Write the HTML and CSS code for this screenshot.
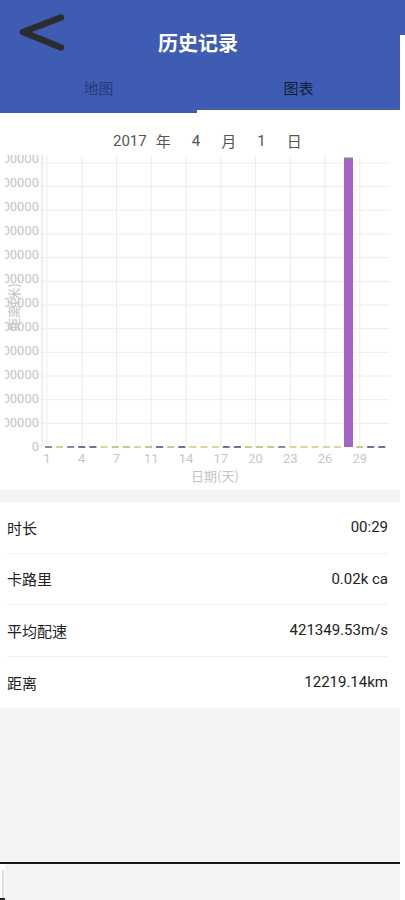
FILE: index.html
```html
<!DOCTYPE html>
<html lang="zh">
<head>
<meta charset="utf-8">
<title>历史记录</title>
<link rel="stylesheet" href="styles.css">
</head>
<body>
<div class="page">
  <header class="appbar">
    <div class="titlebar">
      <svg class="back" width="52" height="42" viewBox="0 0 52 42">
        <polyline points="45,5.5 7,20 45,35.5" fill="none" stroke="#2c2c2c" stroke-width="6.5" stroke-linecap="round" stroke-linejoin="round"/>
      </svg>
      <h1 class="title">历史记录</h1>
      <div></div>
    </div>
    <nav class="tabs">
      <div class="tab tab-map">地图</div>
      <div class="tab tab-chart">图表</div>
    </nav>
  </header>

  <section class="chart-section">
    <div class="date">
      <span class="num">2017</span><span class="unit u-year">年</span>
      <span class="num gap">4</span><span class="unit gap">月</span>
      <span class="num gap">1</span><span class="unit gap">日</span>
    </div>
    <svg class="chart" width="405" height="335" viewBox="0 0 405 335">
      <defs>
        <clipPath id="yclip"><rect x="5" y="0" width="38" height="300"/></clipPath>
      </defs>
      <g stroke="#ececec" stroke-width="1">
        <line x1="42" y1="268.3" x2="390" y2="268.3"/>
        <line x1="42" y1="244.7" x2="390" y2="244.7"/>
        <line x1="42" y1="221" x2="390" y2="221"/>
        <line x1="42" y1="197.3" x2="390" y2="197.3"/>
        <line x1="42" y1="173.7" x2="390" y2="173.7"/>
        <line x1="42" y1="150" x2="390" y2="150"/>
        <line x1="42" y1="126.3" x2="390" y2="126.3"/>
        <line x1="42" y1="102.6" x2="390" y2="102.6"/>
        <line x1="42" y1="79" x2="390" y2="79"/>
        <line x1="42" y1="55.3" x2="390" y2="55.3"/>
        <line x1="42" y1="31.6" x2="390" y2="31.6"/>
        <line x1="42" y1="8" x2="390" y2="8"/>
        <line x1="47" y1="0" x2="47" y2="292"/>
        <line x1="81.75" y1="0" x2="81.75" y2="292"/>
        <line x1="116.5" y1="0" x2="116.5" y2="292"/>
        <line x1="151.25" y1="0" x2="151.25" y2="292"/>
        <line x1="186" y1="0" x2="186" y2="292"/>
        <line x1="220.75" y1="0" x2="220.75" y2="292"/>
        <line x1="255.5" y1="0" x2="255.5" y2="292"/>
        <line x1="290.25" y1="0" x2="290.25" y2="292"/>
        <line x1="325" y1="0" x2="325" y2="292"/>
        <line x1="359.75" y1="0" x2="359.75" y2="292"/>
      </g>
      <line x1="42" y1="0" x2="42" y2="292" stroke="#dcdcdc" stroke-width="1"/>

      <g class="ylabels" text-anchor="end" clip-path="url(#yclip)">
        <text x="39" y="291">0</text>
        <text x="39" y="267">100000</text>
        <text x="39" y="243">200000</text>
        <text x="39" y="219">300000</text>
        <text x="39" y="195">400000</text>
        <text x="39" y="171">500000</text>
        <text x="39" y="147">600000</text>
        <text x="39" y="123">700000</text>
        <text x="39" y="99">800000</text>
        <text x="39" y="75">900000</text>
        <text x="39" y="51">1000000</text>
        <text x="39" y="27">1100000</text>
        <text x="39" y="3">1200000</text>
      </g>
      <text class="ytitle" transform="translate(13 152) rotate(-90)" text-anchor="middle">距离(米)</text>

      <g>
        <rect x="45" y="291" width="7" height="2" fill="#7690ab"/>
        <rect x="56.1" y="291" width="7" height="2" fill="#d3d08c"/>
        <rect x="67.2" y="291" width="7" height="2" fill="#7690ab"/>
        <rect x="78.3" y="291" width="7" height="2" fill="#7b6d93"/>
        <rect x="89.4" y="291" width="7" height="2" fill="#7b6d93"/>
        <rect x="100.6" y="291" width="7" height="2" fill="#dfd49a"/>
        <rect x="111.7" y="291" width="7" height="2" fill="#c4c991"/>
        <rect x="122.8" y="291" width="7" height="2" fill="#c4c991"/>
        <rect x="133.9" y="291" width="7" height="2" fill="#dfd49a"/>
        <rect x="145" y="291" width="7" height="2" fill="#c4c991"/>
        <rect x="156.1" y="291" width="7" height="2" fill="#7b6d93"/>
        <rect x="167.2" y="291" width="7" height="2" fill="#c4c991"/>
        <rect x="178.3" y="291" width="7" height="2" fill="#7b6d93"/>
        <rect x="189.4" y="291" width="7" height="2" fill="#dfd49a"/>
        <rect x="200.5" y="291" width="7" height="2" fill="#dfd49a"/>
        <rect x="211.7" y="291" width="7" height="2" fill="#dfd49a"/>
        <rect x="222.8" y="291" width="7" height="2" fill="#7b6d93"/>
        <rect x="233.9" y="291" width="7" height="2" fill="#7b6d93"/>
        <rect x="245" y="291" width="7" height="2" fill="#c4c991"/>
        <rect x="256.1" y="291" width="7" height="2" fill="#c4c991"/>
        <rect x="267.2" y="291" width="7" height="2" fill="#c4c991"/>
        <rect x="278.3" y="291" width="7" height="2" fill="#7690ab"/>
        <rect x="289.4" y="291" width="7" height="2" fill="#dfd49a"/>
        <rect x="300.5" y="291" width="7" height="2" fill="#dfd49a"/>
        <rect x="311.6" y="291" width="7" height="2" fill="#dfd49a"/>
        <rect x="322.8" y="291" width="7" height="2" fill="#dfd49a"/>
        <rect x="333.9" y="291" width="7" height="2" fill="#dfd49a"/>
        <rect x="344" y="2.7" width="9" height="289.3" fill="#a463c8"/>
        <rect x="344" y="2.7" width="9" height="1.6" fill="#888888"/>
        <rect x="356.1" y="291" width="7" height="2" fill="#c4c991"/>
        <rect x="367.2" y="291" width="7" height="2" fill="#7b6d93"/>
        <rect x="378.3" y="291" width="7" height="2" fill="#7b6d93"/>
      </g>

      <g class="xlabels" text-anchor="middle">
        <text x="47" y="303">1</text>
        <text x="81.75" y="303">4</text>
        <text x="116.5" y="303">7</text>
        <text x="151.25" y="303">11</text>
        <text x="186" y="303">14</text>
        <text x="220.75" y="303">17</text>
        <text x="255.5" y="303">20</text>
        <text x="290.25" y="303">23</text>
        <text x="325" y="303">26</text>
        <text x="359.75" y="303">29</text>
      </g>
      <text class="xtitle" x="215" y="320" text-anchor="middle">日期(天)</text>
    </svg>
  </section>

  <section class="stats">
    <div class="stat-row"><span class="stat-label">时长</span><span class="stat-value">00:29</span></div>
    <div class="stat-row"><span class="stat-label">卡路里</span><span class="stat-value">0.02k ca</span></div>
    <div class="stat-row"><span class="stat-label">平均配速</span><span class="stat-value">421349.53m/s</span></div>
    <div class="stat-row"><span class="stat-label">距离</span><span class="stat-value">12219.14km</span></div>
  </section>

  <div class="filler"></div>
  <div class="bottom-rule"></div>
  <div class="corner"></div>
</div>
</body>
</html>
```

FILE: styles.css
```css
* { box-sizing: border-box; }

html, body {
  margin: 0;
  padding: 0;
  background: #ffffff;
}

body {
  font-family: Roboto, "Noto Sans CJK SC", sans-serif;
  width: 405px;
  height: 900px;
  overflow: hidden;
}

.page {
  width: 405px;
  display: flex;
  flex-direction: column;
  background: linear-gradient(to right, #f4f4f4 400px, #ffffff 400px);
}

/* ---------- app bar ---------- */
.appbar {
  width: 405px;
  background: linear-gradient(#3e5cb2 35px, #ffffff 35px);
}

.titlebar {
  width: 400px;
  height: 65px;
  background: #3e5cb2;
  display: grid;
  grid-template-columns: 1fr auto 1fr;
  align-items: start;
}

.back {
  display: block;
  margin: 12px 0 0 16px;
}

.title {
  margin: 31px 0 0 0;
  font-family: "Noto Sans CJK SC", sans-serif;
  font-size: 20px;
  line-height: 24px;
  font-weight: 700;
  color: #ffffff;
  position: relative;
  left: -2px;
}

.tabs {
  width: 400px;
  display: flex;
  align-items: flex-start;
}

.tab {
  font-family: "Noto Sans CJK SC", sans-serif;
  font-size: 15px;
  text-align: center;
  background: #3e5cb2;
}

.tab-map {
  width: 197px;
  height: 48px;
  line-height: 45px;
  color: #29397a;
}

.tab-chart {
  flex: 1;
  height: 45px;
  line-height: 45px;
  color: #161d3a;
}

/* ---------- chart ---------- */
.chart-section {
  width: 400px;
  background: #ffffff;
}

.date {
  height: 42px;
  padding: 13px 0 0 113px;
  display: flex;
  align-items: center;
  line-height: 20px;
  font-size: 15px;
  color: #555555;
}

.date .num { font-family: Roboto, sans-serif; }
.date .unit { font-family: "Noto Sans CJK SC", sans-serif; }
.date .u-year { margin-left: 9px; }
.date .gap { margin-left: 21px; }

.chart {
  display: block;
}

.ylabels text {
  font-family: Roboto, sans-serif;
  font-size: 13px;
  fill: #c4c4c4;
  dominant-baseline: central;
}

.xlabels text {
  font-family: Roboto, sans-serif;
  font-size: 13px;
  fill: #c8c8c8;
  dominant-baseline: central;
}

.xtitle, .ytitle {
  font-family: "Noto Sans CJK SC", sans-serif;
  font-size: 13px;
  fill: #c4c4c4;
  dominant-baseline: central;
}

/* ---------- stats ---------- */
.stats {
  width: 400px;
  margin-top: 12px;
  background: #ffffff;
}

.stat-row {
  height: 51.5px;
  margin: 0 12px 0 7px;
  display: flex;
  align-items: center;
  justify-content: space-between;
  border-bottom: 1px solid #f0f0f0;
  font-size: 15px;
  color: #222222;
}

.stat-row:last-child { border-bottom: 0; }

.stat-label { font-family: "Noto Sans CJK SC", sans-serif; }
.stat-value { font-family: Roboto, sans-serif; }

.filler {
  width: 400px;
  height: 154px;
  background: #f4f4f4;
}

.bottom-rule {
  width: 400px;
  height: 2px;
  background: #161616;
}

.corner {
  width: 5px;
  height: 36px;
  background: #ffffff;
}

.corner::before {
  content: "";
  display: block;
  width: 2px;
  height: 28px;
  margin: 6px 0 0 2px;
  background: #dedede;
}

.corner::after {
  content: "";
  display: block;
  width: 5px;
  height: 2px;
  background: #222222;
}
```
